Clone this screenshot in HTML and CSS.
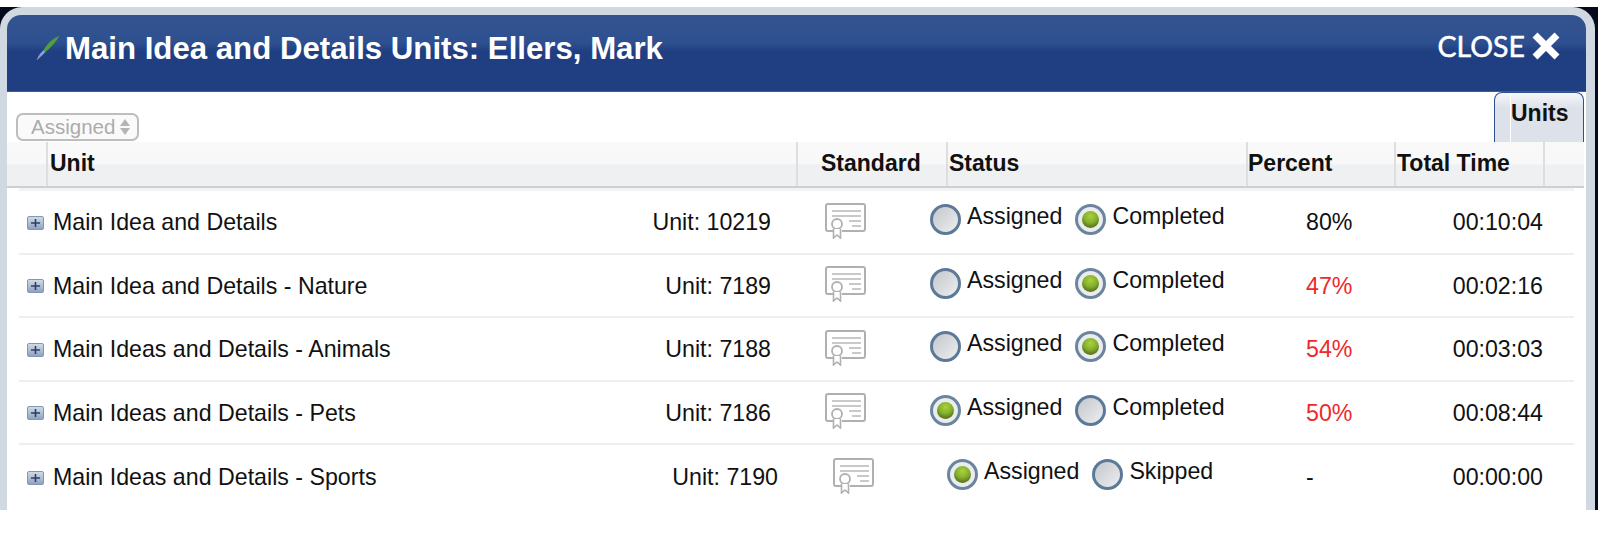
FILE: index.html
```html
<html>
<head>
    <title>Main Idea and Details Units</title>
    <link rel="stylesheet" href="styles.css">
</head>
<body>
    <svg class="defs" width="0" height="0">
        <defs>
            <linearGradient id="plusfill" x1="0" y1="0" x2="0" y2="1">
                <stop offset="0" stop-color="#d3dde9"/>
                <stop offset="1" stop-color="#8ba1be"/>
            </linearGradient>
            <symbol id="cert" viewBox="0 0 41 36">
                <path d="M10 28H3Q1 28 1 26V3Q1 1 3 1H38Q40 1 40 3V26Q40 28 38 28H17" fill="none" stroke="#b0b0b0" stroke-width="2"/>
                <path d="M7 8H36M7 13H36M24 18H36M27 23H36" fill="none" stroke="#b8b8b8" stroke-width="1.6"/>
                <circle cx="12" cy="21" r="5" fill="#fff" stroke="#b0b0b0" stroke-width="1.8"/>
                <path d="M8.5 26V35L12 32L15.5 35V26" fill="#fff" stroke="#b0b0b0" stroke-width="1.6"/>
            </symbol>
            <symbol id="plus" viewBox="0 0 17 14">
                <rect x="0.5" y="0.5" width="16" height="13" rx="1.5" fill="url(#plusfill)" stroke="#8298b5"/>
                <path d="M8.5 3V11M4 7H13" stroke="#2b3f63" stroke-width="1.6"/>
            </symbol>
        </defs>
    </svg>

    <div class="backdrop">
        <div class="window">
            <div class="titlebar">
                <div class="title">
                    <svg class="pen" viewBox="0 0 24 26" width="24" height="26">
                        <path d="M0.5 25.5L3 20L5 21.5Z" fill="#9aa3b5"/>
                        <path d="M3 20L7.5 15L9.5 17L5 21.5Z" fill="#7fa8e0"/>
                        <path d="M7.5 15C11 9 16 4 23.5 0.5C20 7 15 12.5 9.5 17Z" fill="#4fa03a"/>
                    </svg>
                    <span>Main Idea and Details Units: Ellers, Mark</span>
                </div>
                <div class="close">
                    <span>CLOSE</span>
                    <svg viewBox="0 0 28 28" width="28" height="28">
                        <path d="M3 3L25 25M25 3L3 25" stroke="#fff" stroke-width="7"/>
                    </svg>
                </div>
            </div>

            <div class="toolbar">
                <div class="select">
                    <span>Assigned</span>
                    <span class="arrows"><i class="up"></i><i class="down"></i></span>
                </div>
                <div class="tab"><span>Units</span></div>
            </div>

            <div class="headrow">
                <div class="hcell stub"></div>
                <div class="hcell h-unit">Unit</div>
                <div class="hcell h-standard">Standard</div>
                <div class="hcell h-status">Status</div>
                <div class="hcell h-percent">Percent</div>
                <div class="hcell h-time">Total Time</div>
                <div class="hcell h-end"></div>
            </div>

            <div class="rows">
                <div class="row">
                    <div class="name"><svg class="plus"><use href="#plus"/></svg>Main Idea and Details</div>
                    <div class="unit">Unit: 10219</div>
                    <svg class="cert"><use href="#cert"/></svg>
                    <div class="status">
                        <span class="radio"></span><span class="label">Assigned</span>
                        <span class="radio on"></span><span class="label">Completed</span>
                    </div>
                    <div class="percent">80%</div>
                    <div class="time">00:10:04</div>
                </div>
                <div class="row">
                    <div class="name"><svg class="plus"><use href="#plus"/></svg>Main Idea and Details - Nature</div>
                    <div class="unit">Unit: 7189</div>
                    <svg class="cert"><use href="#cert"/></svg>
                    <div class="status">
                        <span class="radio"></span><span class="label">Assigned</span>
                        <span class="radio on"></span><span class="label">Completed</span>
                    </div>
                    <div class="percent low">47%</div>
                    <div class="time">00:02:16</div>
                </div>
                <div class="row">
                    <div class="name"><svg class="plus"><use href="#plus"/></svg>Main Ideas and Details - Animals</div>
                    <div class="unit">Unit: 7188</div>
                    <svg class="cert"><use href="#cert"/></svg>
                    <div class="status">
                        <span class="radio"></span><span class="label">Assigned</span>
                        <span class="radio on"></span><span class="label">Completed</span>
                    </div>
                    <div class="percent low">54%</div>
                    <div class="time">00:03:03</div>
                </div>
                <div class="row">
                    <div class="name"><svg class="plus"><use href="#plus"/></svg>Main Ideas and Details - Pets</div>
                    <div class="unit">Unit: 7186</div>
                    <svg class="cert"><use href="#cert"/></svg>
                    <div class="status">
                        <span class="radio on"></span><span class="label">Assigned</span>
                        <span class="radio"></span><span class="label">Completed</span>
                    </div>
                    <div class="percent low">50%</div>
                    <div class="time">00:08:44</div>
                </div>
                <div class="row shifted">
                    <div class="name"><svg class="plus"><use href="#plus"/></svg>Main Ideas and Details - Sports</div>
                    <div class="unit">Unit: 7190</div>
                    <svg class="cert"><use href="#cert"/></svg>
                    <div class="status">
                        <span class="radio on"></span><span class="label">Assigned</span>
                        <span class="radio"></span><span class="label">Skipped</span>
                    </div>
                    <div class="percent">-</div>
                    <div class="time">00:00:00</div>
                </div>
            </div>
        </div>
    </div>
</body>
</html>
```

FILE: styles.css
```css
* {
    margin: 0px;
    padding: 0px;
    box-sizing: border-box;
}

html, body {
    width: 1604px;
    height: 536px;
    overflow: hidden;
    background-color: #ffffff;
}

body {
    padding-top: 7px;
    font-family: "Liberation Sans", Arial, sans-serif;
    color: #111111;
}

.defs {
    position: absolute;
}

.backdrop {
    width: 1598px;
    height: 503px;
    padding-right: 3px;
    background-color: #06081c;
}

.window {
    height: 503px;
    background-color: #ffffff;
    border: 7px solid #d0d9e2;
    border-top-width: 8px;
    border-bottom: none;
    border-right-width: 9px;
    border-radius: 22px 22px 0 0;
}

.titlebar {
    height: 77px;
    padding: 17px 26px 0 29px;
    display: flex;
    justify-content: space-between;
    align-items: flex-start;
    color: #ffffff;
    border-radius: 14px 14px 0 0;
    border-bottom: 1px solid #3d5f99;
    background: linear-gradient(#34548f 0%, #2f5090 36%, #1f3f82 48%, #1f3f82 100%);
}

.title {
    display: flex;
    align-items: center;
    font-size: 31.2px;
    font-weight: bold;
    line-height: 34px;
}

.pen {
    margin-right: 5px;
    margin-top: -2px;
}

.close {
    display: flex;
    align-items: center;
    gap: 7px;
    font-family: Lato, sans-serif;
    font-size: 28.5px;
    line-height: 34px;
    -webkit-text-stroke: 0.5px #ffffff;
    margin-top: -3px;
}

.toolbar {
    height: 50px;
    display: flex;
    justify-content: space-between;
    align-items: flex-end;
    padding: 0 2px 0 9px;
}

.select {
    width: 123px;
    height: 28px;
    margin-bottom: 1px;
    padding-left: 13px;
    display: flex;
    align-items: center;
    gap: 5px;
    font-size: 20.5px;
    color: #acacac;
    border: 2px solid #bdbdbd;
    border-radius: 7px;
    background-color: #fafafa;
}

.arrows {
    display: flex;
    flex-direction: column;
    gap: 2px;
}

.arrows i {
    display: block;
    width: 0;
    height: 0;
    border-left: 5px solid transparent;
    border-right: 5px solid transparent;
}

.arrows .up {
    border-bottom: 7px solid #b5b5b5;
}

.arrows .down {
    border-top: 7px solid #b5b5b5;
}

.tab {
    width: 90px;
    height: 50px;
    padding-left: 15px;
    font-size: 23px;
    font-weight: bold;
    line-height: 40px;
    background: linear-gradient(#f6f7f9 0%, #dde2ea 30%, #dde2ea 100%);
    border: 1px solid #2f5090;
    border-bottom: none;
    border-radius: 8px 8px 0 0;
}

.tab span {
    display: block;
    height: 100%;
    border-left: 1px solid #ffffff;
}

.headrow {
    height: 46px;
    margin-right: 2px;
    display: flex;
    font-size: 23px;
    font-weight: bold;
    border-bottom: 2px solid #cfcfcf;
    background: linear-gradient(#f9f9f9 0%, #f8f8f8 50%, #eff0f1 52%, #eff0f1 100%);
}

.hcell {
    height: 44px;
    padding-left: 1px;
    line-height: 42px;
    border-left: 2px solid #dedede;
}

.stub {
    width: 39px;
    border-left: none;
}

.h-unit {
    width: 750px;
    padding-left: 2px;
}

.h-standard {
    width: 150px;
    padding-left: 23px;
}

.h-status {
    width: 300px;
}

.h-percent {
    width: 148px;
    padding-left: 0;
}

.h-time {
    width: 149px;
}

.h-end {
    flex: 1;
}

.rows {
    margin: 0 12px;
    border-top: 3px solid #f3f3f3;
}

.row {
    height: 63.5px;
    padding-left: 8px;
    padding-top: 2px;
    display: flex;
    align-items: center;
    font-size: 23.2px;
    border-bottom: 2px solid #eeeeee;
}

.row:last-child {
    border-bottom: none;
}

.name {
    width: 450px;
    flex: none;
    display: flex;
    align-items: center;
}

.plus {
    width: 17px;
    height: 14px;
    margin-right: 9px;
}

.unit {
    width: 294px;
    flex: none;
    text-align: right;
}

.cert {
    width: 41px;
    height: 36px;
    flex: none;
    margin-left: 54px;
    margin-top: -4px;
}

.status {
    width: 376px;
    flex: none;
    margin-left: 64px;
    display: flex;
    align-items: center;
}

.label {
    margin-left: 6px;
    margin-right: 13px;
    position: relative;
    top: -6px;
}

.radio {
    width: 31px;
    height: 31px;
    flex: none;
    margin-top: -6px;
    display: flex;
    align-items: center;
    justify-content: center;
    border: 3px solid #5c7a98;
    border-radius: 50%;
    background: linear-gradient(135deg, #c4c7cb, #eceef0);
}

.radio.on {
    border-color: #6c859f;
    background: #e9edf0;
}

.radio.on::after {
    content: "";
    width: 17px;
    height: 17px;
    border-radius: 50%;
    background: radial-gradient(circle at 50% 30%, #a8d23e 0%, #86b02a 45%, #3a4a10 100%);
}

.percent {
    width: 120px;
    flex: none;
}

.low {
    color: #ee2a2a;
}

.time {
    width: 117px;
    flex: none;
    text-align: right;
}

.shifted .unit {
    width: 301px;
}

.shifted .cert {
    margin-left: 55px;
}

.shifted .status {
    width: 359px;
    margin-left: 73px;
}
```
